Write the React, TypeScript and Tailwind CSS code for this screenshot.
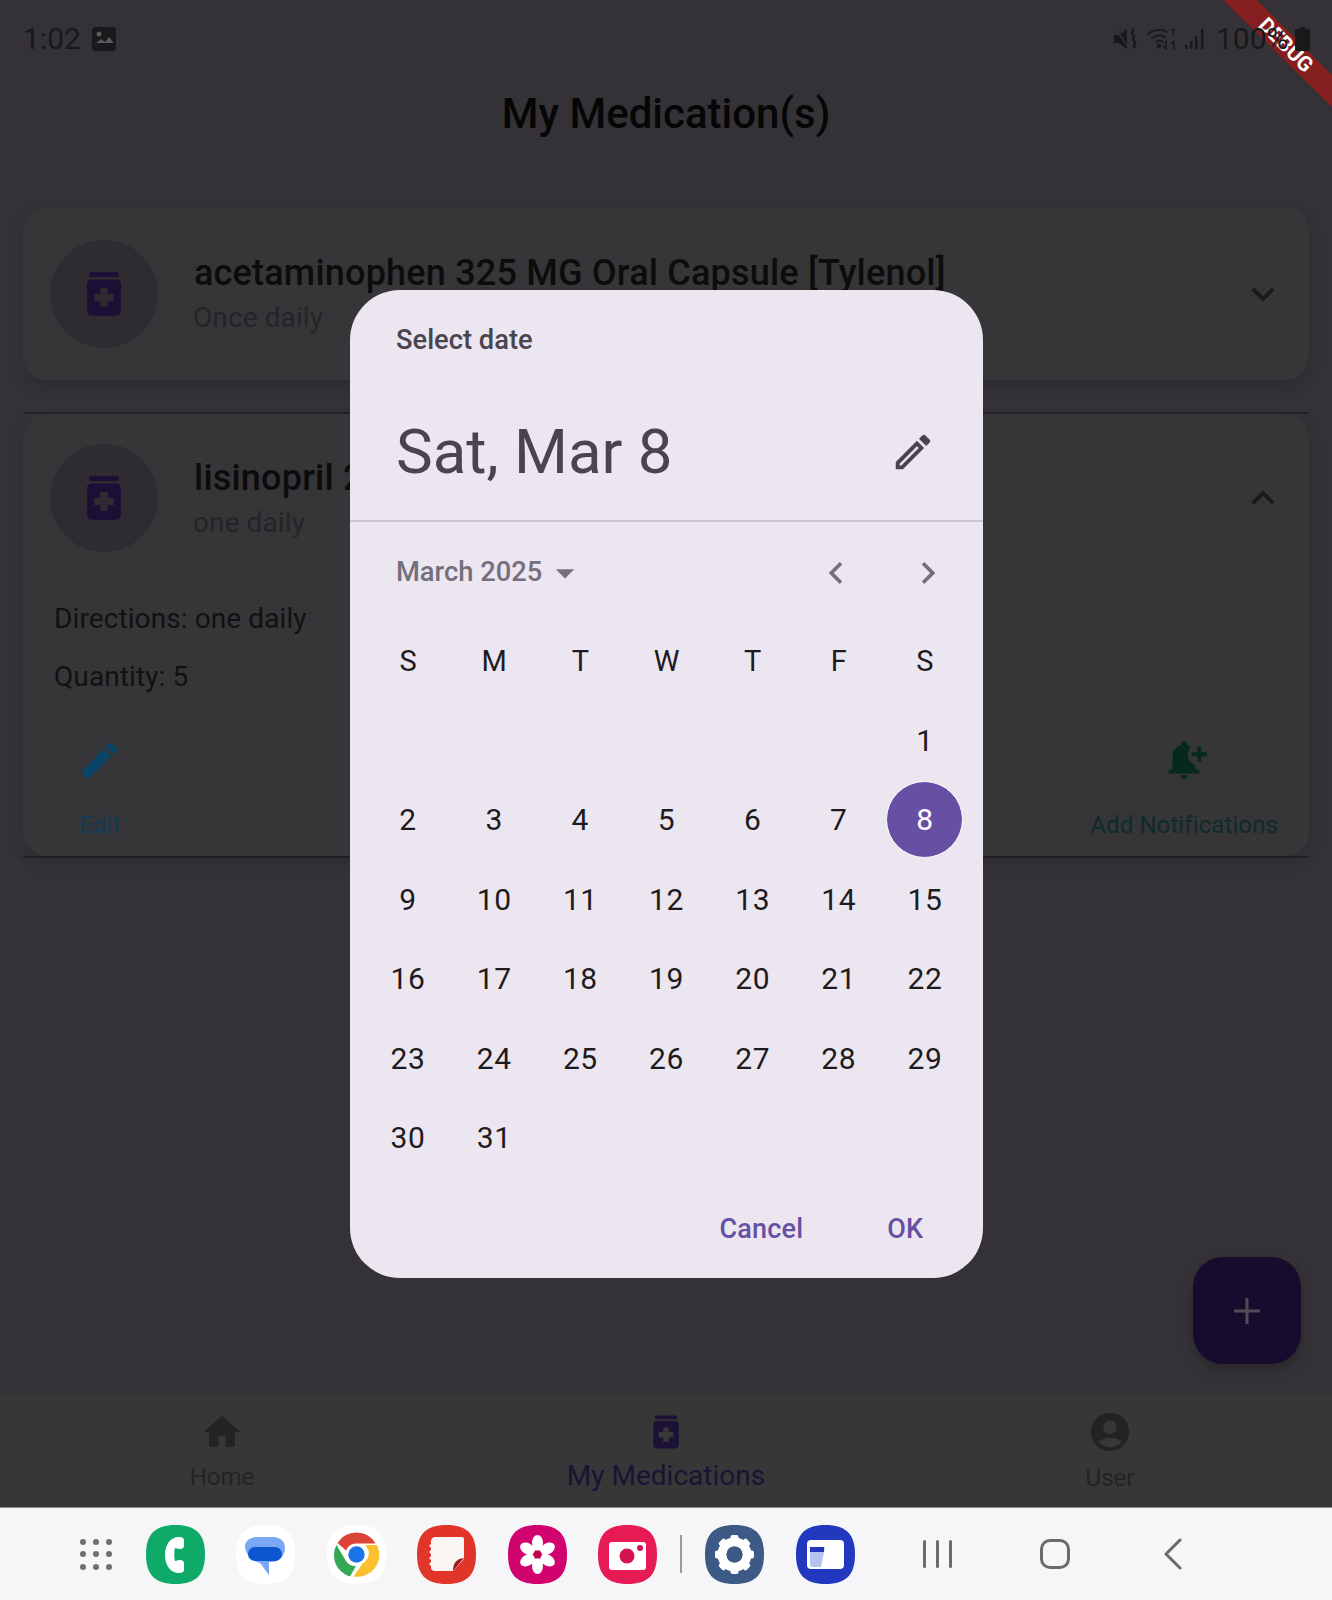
import { MdAccountCircle, MdEdit, MdHome, MdMedication, MdNotificationAdd, MdOutlineEdit, MdKeyboardArrowDown, MdKeyboardArrowUp, MdChevronLeft, MdChevronRight, MdArrowDropDown } from "react-icons/md";

const weekdays = ["S", "M", "T", "W", "T", "F", "S"];
const days: (number | null)[] = [null, null, null, null, null, null, ...Array.from({ length: 31 }, (_, i) => i + 1)];
const squircle = "M29.5 0C50 0 59 9 59 29.5S50 59 29.5 59 0 50 0 29.5 9 0 29.5 0Z";

function StatusBar() {
  return (
    <div className="relative z-10 h-[78px] flex items-center justify-between pl-[23px] pr-[22px] text-[#19181a]">
      <div className="flex items-center gap-[11px]">
        <span className="text-[30px] leading-none">1:02</span>
        <svg width="24" height="24" viewBox="0 0 24 24">
          <rect width="24" height="24" rx="3.500" fill="currentColor" />
          <circle cx="7" cy="7" r="2.500" fill="#5a585c" />
          <path d="M3 17l6-5 4 3 4-5 4 5v1H3Z" fill="#5a585c" />
        </svg>
      </div>
      <div className="flex items-center">
        <svg width="24" height="24" viewBox="0 0 24 24" fill="currentColor">
          <path d="M0 8h5l8-6v20l-8-6H0Z" />
          <path d="M1 1l14 20" stroke="#333236" strokeWidth="1.500" />
          <path d="M18 2c3 2-2 4 1 6s-2 4 1 6-2 4 1 7" fill="none" stroke="currentColor" strokeWidth="2.400" />
        </svg>
        <svg width="30" height="24" viewBox="0 0 30 24" className="ml-[9px]" fill="none" stroke="currentColor" strokeWidth="1.700" strokeLinecap="round">
          <path d="M1 7C7 2 15 2 20 5M5 11c4-3 9-3 13-1M9 15c2-1.500 5-1.500 7 0" />
          <circle cx="12" cy="19" r="1.500" fill="currentColor" />
          <path d="M19 14v8m-2.500-2.500L19 22M27 22v-8m-2.500 2.500L27 14M24 3h3l-1 5" strokeWidth="1.500" />
        </svg>
        <svg width="20" height="22" viewBox="0 0 20 22" className="ml-[8px]" fill="currentColor">
          <rect x="0" y="17" width="2.500" height="4" />
          <rect x="5" y="13" width="2.500" height="8" />
          <rect x="10" y="8" width="2.500" height="13" />
          <rect x="16" y="1" width="2.500" height="20" />
        </svg>
        <span className="ml-[11px] w-[79px] text-[30px] leading-none whitespace-nowrap">100%</span>
        <svg width="15" height="24" viewBox="0 0 15 24" fill="currentColor">
          <path d="M4.500 0h6v2H13a2 2 0 0 1 2 2v18a2 2 0 0 1-2 2H2a2 2 0 0 1-2-2V4a2 2 0 0 1 2-2h2.500z" />
        </svg>
      </div>
    </div>
  );
}

function Avatar() {
  return (
    <div className="w-[108px] h-[108px] rounded-full bg-[#2e2c31] flex items-center justify-center shrink-0 text-[#1b0f35]">
      <MdMedication size={58} />
    </div>
  );
}

function MedHead({ name, sub, open }: { name: string; sub: string; open?: boolean }) {
  return (
    <div className="flex items-center pl-[27px] pr-[32px]">
      <Avatar />
      <div className="ml-[36px] flex-1 min-w-0">
        <div className="text-[36px] leading-[46px] tracking-[0.2px] font-medium text-[#0c0c0d] whitespace-nowrap">{name}</div>
        <div className="mt-[3px] text-[28px] leading-[38px] tracking-[0.1px] text-[#252428] -ml-[1px]">{sub}</div>
      </div>
      {open ? <MdKeyboardArrowUp size={46} className="text-[#19181a] -mr-[9px]" /> : <MdKeyboardArrowDown size={46} className="text-[#19181a] -mr-[9px]" />}
    </div>
  );
}

function NavItem({ label, active, icon }: { label: string; active?: boolean; icon: React.ReactNode }) {
  return (
    <div className={`flex flex-col items-center pt-[15px] ${active ? "text-[#1c1235]" : "text-[#232323]"}`}>
      {icon}
      <span className={`leading-[30px] ${active ? "text-[28px] mt-[7px]" : "text-[24px] mt-[8px]"}`}>{label}</span>
    </div>
  );
}

function DatePicker() {
  return (
    <div className="absolute z-20 left-[350px] top-[290px] w-[633px] h-[988px] rounded-[50px] bg-[#ece6f0] flex flex-col">
      <div className="h-[230px] border-b-2 border-[#cac4d0] box-content pl-[46px] pr-[47px]">
        <div className="pt-[35px] text-[27.300px] leading-[30px] font-medium text-[#49454f]">Select date</div>
        <div className="mt-[62px] flex items-center justify-between">
          <span className="text-[61.800px] leading-[70px] text-[#49454f]">Sat, Mar 8</span>
          <MdOutlineEdit size={46} className="text-[#49454f]" />
        </div>
      </div>
      <div className="h-[99px] flex items-center pl-[46px] pr-[33px] pt-[2px] text-[#746f7c]">
        <span className="text-[27.300px] font-medium">March 2025</span>
        <MdArrowDropDown size={44} className="ml-[1px]" />
        <MdChevronLeft size={44} className="ml-auto mr-[48px]" />
        <MdChevronRight size={44} />
      </div>
      <div className="grid grid-cols-7 pl-[15px] pr-[15px] auto-rows-[79.5px] text-[#1d1b20]">
        {weekdays.map((d, i) => (
          <div key={i} className="flex items-center justify-center pt-[2px] text-[29px]">{d}</div>
        ))}
        {days.map((d, i) => (
          <div key={i} className="flex items-center justify-center text-[30px] tracking-[0.6px]">
            {d === 8 ? (
              <span className="w-[77px] h-[77px] shrink-0 rounded-full bg-[#6750a4] border-[1.5px] border-white text-white flex items-center justify-center">{d}</span>
            ) : d}
          </div>
        ))}
      </div>
      <div className="flex-1 flex items-center justify-end gap-[84px] pr-[60px] pt-[2px] text-[27px] font-medium text-[#6750a4]">
        <span className="tracking-[0.2px]">Cancel</span>
        <span>OK</span>
      </div>
    </div>
  );
}

function AppIcon({ fill, children }: { fill: string; children?: React.ReactNode }) {
  return (
    <svg width="59" height="59" viewBox="0 0 59 59" className="shrink-0">
      <path d={squircle} fill={fill} />
      {children}
    </svg>
  );
}

function Dock() {
  return (
    <div className="h-[93px] border-t border-[#8b8b8b] bg-[#f6f6f8] flex items-center pl-[80px]">
      <div className="grid grid-cols-3 gap-x-[6.500px] gap-y-[6.500px] w-[32px]">
        {Array.from({ length: 9 }).map((_, i) => (
          <span key={i} className="w-[6px] h-[6px] rounded-full bg-[#6f6f6f]" />
        ))}
      </div>
      <div className="ml-[34px] flex items-center gap-[31.400px]">
        <AppIcon fill="#0fa968">
          <path d="M33 12c-9 0-14 8-14 18s5 18 14 18c3 0 5-1 5-3v-7c0-2-2-3-4-3-2 0-4 1-5 1-1-3-1-10 0-13 1 0 3 1 5 1 2 0 4-1 4-3V15c0-2-2-3-5-3Z" fill="#fff" />
        </AppIcon>
        <AppIcon fill="#ffffff">
          <path d="M21 12h16c8 0 12 5 12 11 0 8-6 14-14 14h-2v13l-9-12c-9-2-15-10-15-17 0-5 6-9 12-9Z" fill="#7ba7f7" />
          <rect x="12" y="22" width="34" height="14" rx="7" fill="#0b57d0" />
        </AppIcon>
        <AppIcon fill="#ffffff">
          <path d="M29.500 7.500a22 22 0 0 1 19 11H29.500a11 11 0 0 0-10.500 7L10.500 18a22 22 0 0 1 19-10.500Z" fill="#db4437" />
          <path d="M9.500 20 19 36a11 11 0 0 0 10 5l-6 10.500A22 22 0 0 1 9.500 20Z" fill="#34a853" />
          <path d="M50 20a22 22 0 0 1-23.500 31.500L36 38a11 11 0 0 0 2-18Z" fill="#fbc02d" />
          <circle cx="29.500" cy="29.500" r="10.500" fill="#fff" />
          <circle cx="29.500" cy="29.500" r="8.200" fill="#1a73e8" />
        </AppIcon>
        <AppIcon fill="#e1352a">
          <path d="M18 12h27a2 2 0 0 1 2 2v20L36 46H18c-2 0-4-1-4-3v-2l-2-2 2-2v-2l-2-2 2-2v-2l-2-2 2-2v-2l-2-2 2-2v-3c0-2 2-4 4-4Z" fill="#fbf5f3" />
          <path d="M47 33 36 46c0-8 3-12 11-13Z" fill="#a11d1c" />
        </AppIcon>
        <AppIcon fill="#d1046f">
          {[0, 60, 120, 180, 240, 300].map((a) => (
            <ellipse key={a} cx="29.500" cy="18" rx="5.500" ry="8" fill="#fff" transform={`rotate(${a} 29.500 29.500)`} />
          ))}
          <circle cx="29.500" cy="29.500" r="4" fill="#c2024f" />
        </AppIcon>
        <AppIcon fill="#e61b55">
          <rect x="11" y="17" width="37" height="28" rx="3" fill="#fff" />
          <circle cx="29" cy="31" r="7.500" fill="#d4134f" />
          <circle cx="42" cy="23" r="3" fill="#d4134f" />
        </AppIcon>
      </div>
      <span className="ml-[23px] w-[2px] h-[38px] bg-[#9a9a9c]" />
      <div className="ml-[23px] flex items-center gap-[32px]">
        <AppIcon fill="#3c5a85">
          <g fill="#fff">
            {[0, 45, 90, 135, 180, 225, 270, 315].map((a) => (
              <rect key={a} x="25.500" y="10" width="8" height="8" rx="2" transform={`rotate(${a} 29.500 29.500)`} />
            ))}
          </g>
          <circle cx="29.500" cy="29.500" r="12.500" fill="none" stroke="#fff" strokeWidth="9" />
          <circle cx="29.500" cy="29.500" r="8" fill="#3c5a85" />
        </AppIcon>
        <AppIcon fill="#2138bf">
          <rect x="11" y="15" width="37" height="29" rx="4" fill="#fff" />
          <path d="M14 22h15l-4 20H17a3 3 0 0 1-3-3Z" fill="#b4c2ee" />
          <rect x="14" y="22" width="14" height="5" fill="#2138bf" />
        </AppIcon>
      </div>
      <div className="ml-[68px] flex items-center gap-[10px]">
        <span className="w-[3px] h-[28px] rounded-full bg-[#6b6b6b]" />
        <span className="w-[3px] h-[28px] rounded-full bg-[#6b6b6b]" />
        <span className="w-[3px] h-[28px] rounded-full bg-[#6b6b6b]" />
      </div>
      <span className="ml-[88px] w-[30px] h-[30px] rounded-[10px] border-[3px] border-[#6b6b6b]" />
      <svg width="18" height="32" viewBox="0 0 18 32" className="ml-[94px]" fill="none" stroke="#6b6b6b" strokeWidth="3" strokeLinecap="round" strokeLinejoin="round">
        <path d="M16 2 2 16l14 14" />
      </svg>
    </div>
  );
}

export default function App() {
  return (
    <div className="relative w-[1332px] h-[1600px] overflow-hidden bg-[#343236] flex flex-col font-['Roboto',sans-serif]">
      <StatusBar />
      <div className="h-[70px] flex items-center justify-center text-[42px] font-medium text-[#060606]">My Medication(s)</div>
      <div className="flex-1 pl-[23px] pr-[23px] pt-[59px]">
        <div className="h-[173px] rounded-[24px] bg-[#363537] shadow-[0_6px_14px_rgba(0,0,0,0.14)] flex items-center">
          <div className="w-full">
            <MedHead name="acetaminophen 325 MG Oral Capsule [Tylenol]" sub="Once daily" />
          </div>
        </div>
        <div className="mt-[32px] border-t-2 border-b-2 border-[#232225]">
          <div className="h-[442px] rounded-[24px] bg-[#363537] shadow-[0_6px_14px_rgba(0,0,0,0.14)] pt-[30px]">
            <MedHead name="lisinopril 20 MG" sub="one daily" open />
            <div className="pl-[31px] pr-[31px] text-[#111112] text-[28px] tracking-[0.1px]">
              <div className="mt-[48px] leading-[38px]">Directions: one daily</div>
              <div className="mt-[20px] leading-[38px]">Quantity: 5</div>
              <div className="mt-[41px] flex justify-between">
                <div className="flex flex-col items-center ml-[23px] text-[#113a55]">
                  <MdEdit size={46} className="text-[#0b456a]" />
                  <span className="mt-[27px] text-[24px] leading-[30px]">Edit</span>
                </div>
                <div className="flex flex-col items-center text-[#0e2c27]">
                  <MdNotificationAdd size={46} className="text-[#06291f]" />
                  <span className="mt-[27px] text-[24px] leading-[30px]">Add Notifications</span>
                </div>
              </div>
            </div>
          </div>
        </div>
      </div>
      <div className="h-[112px] bg-[#373737] grid grid-cols-3">
        <NavItem label="Home" icon={<MdHome size={44} />} />
        <NavItem label="My Medications" active icon={<MdMedication size={44} />} />
        <NavItem label="User" icon={<MdAccountCircle size={46} className="-mt-[1px]" />} />
      </div>
      <Dock />

      <div className="absolute left-[1193px] top-[1257px] w-[108px] h-[107px] rounded-[30px] bg-[#180c2e] shadow-[0_6px_12px_rgba(0,0,0,0.2)] flex items-center justify-center">
        <svg width="28" height="28" viewBox="0 0 28 28" stroke="#504c55" strokeWidth="3">
          <path d="M14 1v26M1 14h26" />
        </svg>
      </div>

      <DatePicker />

      <svg width="110" height="108" viewBox="0 0 110 108" className="absolute right-0 top-0">
        <path d="M1 0h34l75 75v32Z" fill="#851f1f" />
      </svg>
      <span className="absolute left-[1246px] top-[33px] w-[80px] text-center rotate-45 text-[21px] leading-[24px] font-bold text-white">DEBUG</span>
    </div>
  );
}
